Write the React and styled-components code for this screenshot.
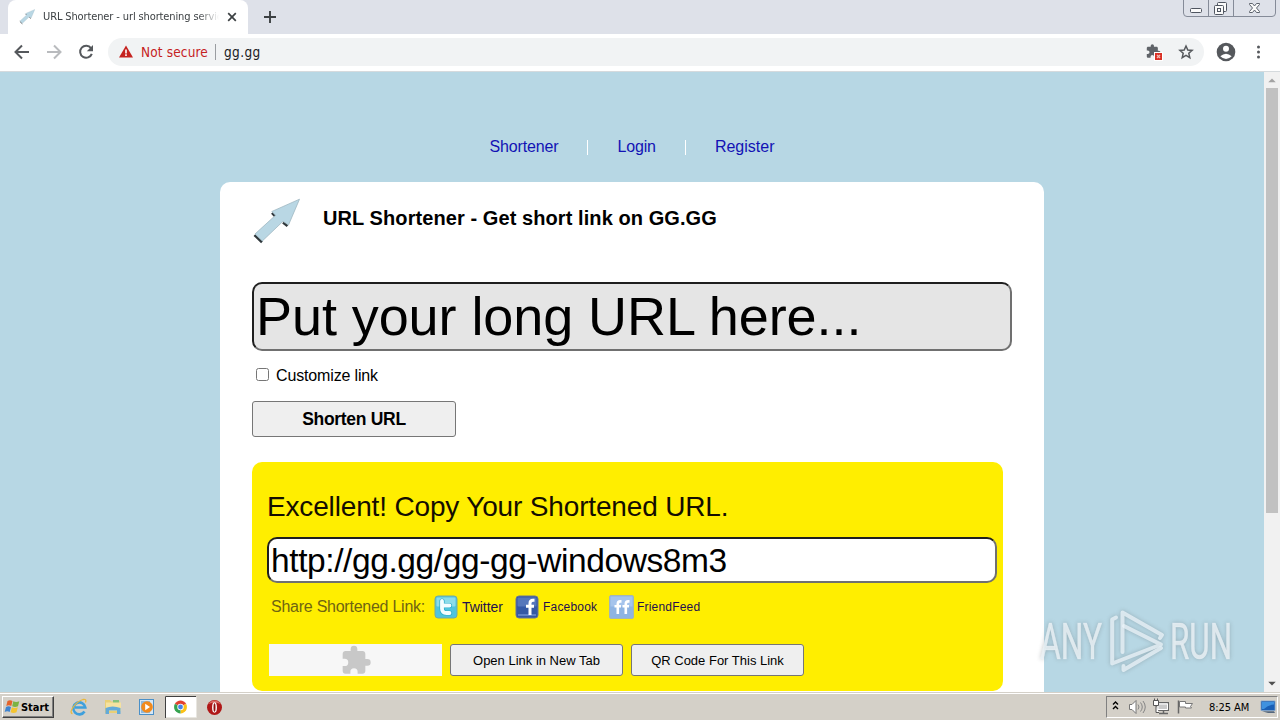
import React, { useState } from "react"
import styled, { createGlobalStyle } from "styled-components"

const App = () => {
  const [custom, setCustom] = useState(false)

  return (
    <Screen>
      <GlobalStyle />
      <TabStrip>
        <Tab>
          <ArrowLogo size={16} />
          <TabTitle>URL Shortener - url shortening servic</TabTitle>
          <CloseIcon />
        </Tab>
        <PlusIcon />
        <WindowControls />
      </TabStrip>

      <Toolbar>
        <NavIcons />
        <AddressBar>
          <WarningIcon />
          <NotSecure>Not secure</NotSecure>
          <AddressDivider />
          <Address>gg.gg</Address>
          <AddressIcons />
        </AddressBar>
        <ProfileIcons />
      </Toolbar>

      <Viewport>
        <Page>
          <Menu>
            <MenuLink href="#">Shortener</MenuLink>
            <MenuLink href="#">Login</MenuLink>
            <MenuLink href="#">Register</MenuLink>
          </Menu>
          <Card>
            <CardHeader>
              <ArrowLogo size={48} />
              <Title>URL Shortener - Get short link on GG.GG</Title>
            </CardHeader>
            <LongUrl defaultValue="Put your long URL here..." />
            <CheckRow>
              <CheckBox type="checkbox" checked={custom} onChange={() => setCustom(!custom)} />
              Customize link
            </CheckRow>
            <ShortenButton>Shorten URL</ShortenButton>
            <Result>
              <ResultTitle>Excellent! Copy Your Shortened URL.</ResultTitle>
              <ShortUrl defaultValue="http://gg.gg/gg-gg-windows8m3" />
              <ShareRow>
                <ShareLabel>Share Shortened Link:</ShareLabel>
                <TwitterIcon />
                <ShareLink href="#" $size={14} $width={53} $spacing={-0.05}>Twitter</ShareLink>
                <FacebookIcon />
                <ShareLink href="#" $size={12} $width={66} $spacing={0.2}>Facebook</ShareLink>
                <FriendFeedIcon />
                <ShareLink href="#" $size={12} $width={70} $spacing={0.2}>FriendFeed</ShareLink>
              </ShareRow>
              <ActionRow>
                <PluginBox><PuzzleIcon /></PluginBox>
                <ActionButton>Open Link in New Tab</ActionButton>
                <ActionButton>QR Code For This Link</ActionButton>
              </ActionRow>
            </Result>
          </Card>
        </Page>
        <Scrollbar>
          <ScrollArrow viewBox="0 0 16 17"><path d="M4 11l4-4 4 4z" fill="#a3a3a3" /></ScrollArrow>
          <ScrollThumb />
          <ScrollArrow viewBox="0 0 16 17"><path d="M4 6l4 4 4-4z" fill="#505050" /></ScrollArrow>
        </Scrollbar>
      </Viewport>

      <Taskbar>
        <StartButton>
          <WindowsFlag />
          Start
        </StartButton>
        <QuickLaunch />
        <Tray>
          <TrayIcons />
          <Clock>8:25 AM</Clock>
          <DesktopIcon />
        </Tray>
      </Taskbar>
      <Watermark />
    </Screen>
  )
}

export default App

// blue arrow, used for the favicon and for the page logo
const ArrowLogo = ({ size }) => (
  <svg width={size} height={size} viewBox="0 0 48 48">
    <path d="M2.500 37l7.500 7.300M20 14.800l3.500 3.700M31 24.500l4.500 3.500" stroke="#30383c" strokeWidth="2.600" />
    <path d="M47.500 1.200L19.800 13.500l3.700 3.800L3 36l7.300 7L31 23.300l5.500 3.700z" fill="#b9d7e4" stroke="#9fb8c2" strokeWidth=".8" />
  </svg>
)

const CloseIcon = () => (
  <svg width="10" height="10" viewBox="0 0 10 10">
    <path d="M1.200 1.200l7.600 7.600M8.800 1.200L1.200 8.800" stroke="#3c4043" strokeWidth="1.700" />
  </svg>
)

const PlusIcon = () => (
  <PlusSvg width="12" height="12" viewBox="0 0 12 12">
    <path d="M6 0v12M0 6h12" stroke="#3c4043" strokeWidth="1.900" />
  </PlusSvg>
)

const WindowControls = () => (
  <ControlsSvg width="94" height="18" viewBox="0 0 94 18" fill="none">
    <path d="M.5 0v13q0 3.500 3.500 3.500h85q3.500 0 3.500-3.500V0M25.500 0v16.500M50.500 0v16.500" stroke="#858b98" />
    <rect x="7.500" y="8.500" width="11" height="4" rx="1" stroke="#4f5560" fill="#fafafa" />
    <rect x="34.500" y="2.500" width="9" height="9" rx="1" stroke="#4f5560" fill="#fafafa" />
    <rect x="31.500" y="5.500" width="9" height="9" rx="1" stroke="#4f5560" fill="#fafafa" />
    <rect x="34.500" y="8.500" width="3" height="3" stroke="#4f5560" />
    <path d="M66.500 3.500h3l2 2.500 2-2.500h3v1l-3 3.500 3 3.500v1h-3l-2-2.500-2 2.500h-3v-1l3-3.500-3-3.500z" stroke="#5d636d" fill="#fafafa" />
  </ControlsSvg>
)

const NavIcons = () => (
  <svg width="108" height="36" viewBox="0 0 108 36" fill="none">
    <path d="M29 18H16.500M22 11.500L15.500 18l6.500 6.500" stroke="#55585c" strokeWidth="2" />
    <path d="M47 18h12.500M54 11.500l6.500 6.500-6.500 6.500" stroke="#b9bbbe" strokeWidth="2" />
    <path d="M91 14.200A6 6 0 1 0 91.800 19.800" stroke="#55585c" strokeWidth="2" />
    <path d="M93 11v6.200h-6.200z" fill="#55585c" />
  </svg>
)

const WarningIcon = () => (
  <svg width="14" height="13" viewBox="0 0 14 13">
    <path d="M7 .5L14 12.500H0z" fill="#c5221f" />
    <path d="M7 4.500v4M7 9.300v1.600" stroke="#fff" strokeWidth="1.600" />
  </svg>
)

const puzzle = "M20.500 11H19V7c0-1.100-.9-2-2-2h-4V3.500a2.500 2.500 0 0 0-5 0V5H4c-1.100 0-2 .9-2 2v3.800h1.500a2.700 2.700 0 0 1 0 5.400H2V20c0 1.100.9 2 2 2h3.800v-1.500a2.700 2.700 0 0 1 5.400 0V22H17c1.100 0 2-.9 2-2v-4h1.500a2.500 2.500 0 0 0 0-5z"

const PuzzleIcon = () => (
  <svg width="34" height="32" viewBox="0 0 24 24">
    <path d={puzzle} fill="#c8c8c8" transform="translate(0 .3)" />
  </svg>
)

const AddressIcons = () => (
  <RightSvg width="60" height="28" viewBox="0 0 60 28">
    <path d={puzzle} fill="#5f6368" transform="translate(1.500 5.500) scale(.65)" />
    <rect x="10.500" y="14.500" width="8" height="8" fill="#d93025" stroke="#fff" />
    <path d="M13 17l3 3M16 17l-3 3" stroke="#f3b9b4" strokeWidth="1.300" />
    <path d="M42 8l1.800 4 4.300.4-3.300 2.900 1 4.300-3.800-2.300-3.800 2.300 1-4.300-3.300-2.900 4.300-.4z" fill="none" stroke="#55585c" strokeWidth="1.500" />
  </RightSvg>
)

const ProfileIcons = () => (
  <svg width="76" height="36" viewBox="0 0 76 36">
    <circle cx="22" cy="18" r="9.300" fill="#55585c" />
    <circle cx="22" cy="14.700" r="3" fill="#fff" />
    <path d="M16.300 22.300q5.700-5 11.400 0q-5.700 5.500-11.400 0z" fill="#fff" />
    <circle cx="54.500" cy="13" r="1.500" fill="#55585c" />
    <circle cx="54.500" cy="18" r="1.500" fill="#55585c" />
    <circle cx="54.500" cy="23" r="1.500" fill="#55585c" />
  </svg>
)

const TwitterIcon = () => (
  <ShareSvg width="24" height="24" viewBox="0 0 24 24">
    <rect x="1" y="1" width="22" height="22" rx="3" fill="#4fc4dd" stroke="#74a9a0" />
    <rect x="2.500" y="2.500" width="19" height="9" rx="1" fill="#8bdcea" />
    <path d="M8 6v7.500q0 4.500 4.500 4.500h3M8.500 10.500h7" fill="none" stroke="#2babc9" strokeWidth="5.200" strokeLinecap="round" />
    <path d="M8 6v7.500q0 4.500 4.500 4.500h3M8.500 10.500h7" fill="none" stroke="#f4fdff" strokeWidth="3.800" strokeLinecap="round" />
  </ShareSvg>
)

const FacebookIcon = () => (
  <ShareSvg width="24" height="24" viewBox="0 0 24 24">
    <rect x="1" y="1" width="22" height="22" rx="3" fill="#3559a5" stroke="#6b7593" />
    <rect x="2.500" y="2.500" width="19" height="9" rx="1" fill="#5677bb" />
    <path d="M3 20h18" stroke="#6f90d0" strokeWidth="1.500" />
    <path d="M19.500 5.200h-1.500q-3 0-3 3V20M11 11.200h8" fill="none" stroke="#fff" strokeWidth="3" />
  </ShareSvg>
)

const FriendFeedIcon = () => (
  <ShareSvg $gap={3} width="25" height="24" viewBox="0 0 25 24">
    <rect x=".5" y=".5" width="24" height="23" rx="1.500" fill="#8fb4e2" stroke="#a5b6b4" />
    <rect x="1.500" y="1.500" width="22" height="10" fill="#a5c4ec" />
    <path d="M12.500 6.400h-1.200q-2.500 0-2.500 2.500V19M5.500 11.200H12M20.500 6.400h-1.200q-2.500 0-2.500 2.500V19M13.500 11.200H20" fill="none" stroke="#fff" strokeWidth="2.600" />
  </ShareSvg>
)

const WindowsFlag = () => (
  <svg width="17" height="16" viewBox="0 0 17 16">
    <path d="M3.500 2q2.500-1.500 5 0L7.300 7q-2.500-1.300-5 0z" fill="#e5642b" />
    <path d="M9.300 2.300q2.800 1.500 6 0L14 7.200q-3 1.500-5.800 0z" fill="#7cb342" />
    <path d="M2 8q2.600-1.400 5 0l-1.300 5q-2.400-1.300-5 0z" fill="#3f84d0" />
    <path d="M7.900 8.300q2.900 1.500 5.900 0l-1.300 5q-3 1.400-5.900 0z" fill="#f4c430" />
  </svg>
)

const QuickLaunch = () => (
  <QuickSvg width="170" height="26" viewBox="0 0 170 26">
    <path d="M18.500 17.500A6 6 0 1 1 19.300 13.500H9" fill="none" stroke="#3fa0dc" strokeWidth="2.600" />
    <path d="M6.500 19.500C2 19 9 8 17 5.500q4-.8 2.500 3" fill="none" stroke="#e8b83e" strokeWidth="1.300" />
    <path d="M39 6h5l1 1.500h9V19H39z" fill="#e9cf76" />
    <path d="M47 6h6v4h-6z" fill="#85c17c" />
    <path d="M40 8.500h15V17H40z" fill="#f5e2a0" />
    <path d="M39.500 14q7-3 15 0v6h-3.500v-3.500h-8V20h-3.500z" fill="#63aad9" />
    <rect x="73.500" y="5.500" width="14" height="15" fill="#d6e7f5" stroke="#4a90c8" />
    <rect x="75" y="7" width="9" height="12" fill="#8fb9dc" />
    <circle cx="81" cy="13" r="5.800" fill="#f28a1c" />
    <path d="M79.200 9.700l4.800 3.300-4.800 3.300z" fill="#fff" />
    <rect x="99" y="2" width="31" height="22" fill="#fff" />
    <path d="M99.500 24V2.500H130" fill="none" stroke="#404040" />
    <path d="M100 23.500h30.500V3" fill="none" stroke="#e8e6e0" />
    <path d="M114.500 13L108.900 9.800A6.500 6.500 0 0 1 120.100 9.800z" fill="#e2412f" />
    <path d="M114.500 13L120.100 9.800A6.500 6.500 0 0 1 114.500 19.500z" fill="#fbc117" />
    <path d="M114.500 13V19.500A6.500 6.500 0 0 1 108.900 9.800z" fill="#36a350" />
    <circle cx="114.500" cy="13" r="3.200" fill="#fff" />
    <circle cx="114.500" cy="13" r="2.400" fill="#4583e8" />
    <circle cx="148.500" cy="13.500" r="7.500" fill="#b01818" />
    <path d="M142.500 10a7 7 0 0 1 12 0q-6-3-12 0z" fill="#da6a64" />
    <ellipse cx="148.500" cy="13.500" rx="2.400" ry="5.200" fill="#fff" />
    <ellipse cx="148.500" cy="13.500" rx="1" ry="4.200" fill="#8f1010" />
  </QuickSvg>
)

const TrayIcons = () => (
  <svg width="94" height="22" viewBox="0 0 94 22" fill="none">
    <path d="M6 8.500L8.500 6 11 8.500M6 13l2.500-2.500L11 13" stroke="#000" strokeWidth="1.400" />
    <path d="M22.500 8.500h2.500l4-4v13l-4-4h-2.500z" fill="#fff" stroke="#767676" />
    <path d="M31 8.500q2 2.500 0 5M33.500 6.500q3.500 4.500 0 9M36 5q4.500 6 0 12" stroke="#858585" />
    <rect x="49.500" y="6.500" width="12" height="8" fill="#c9c9c9" stroke="#666" />
    <path d="M51 8h9.500v5.500H51z" stroke="#fff" />
    <path d="M52 17.500h9M56.500 15v2" stroke="#666" strokeWidth="1.500" />
    <path d="M46.500 4.500h5v5h-5zM47.500 2.500v2M50.500 2.500v2M49 9.500v7h3" stroke="#555" fill="#fff" />
    <path d="M71.500 4.500v13" stroke="#666" strokeWidth="1.500" />
    <path d="M72.500 5.500h6v2h7l-2 3 1 1.500h-6v-1h-6z" fill="#fff" stroke="#777" />
  </svg>
)

const DesktopIcon = () => (
  <svg width="17" height="14" viewBox="0 0 17 14">
    <path d="M1 1h14v9.500H1z" fill="#195eb5" stroke="#7fa2c9" strokeWidth=".8" />
    <path d="M2 2h12v2.500Q8 5 4 9H2z" fill="#3f91df" />
    <path d="M2 11.200h12l1 1.800H8z" fill="#54677e" />
  </svg>
)

const Watermark = () => (
  <MarkSvg width="210" height="76" viewBox="0 0 210 76">
    <g fill="#edf4f7" fillOpacity=".8" stroke="#edf4f7" strokeOpacity=".5" strokeWidth=".7">
      <MarkText x="5" y="53.500" textLength="62" lengthAdjust="spacingAndGlyphs">ANY</MarkText>
      <MarkText x="135" y="53.500" textLength="62" lengthAdjust="spacingAndGlyphs">RUN</MarkText>
    </g>
    <g fill="none" stroke="#eaf4f8" strokeOpacity=".78" strokeWidth="4" strokeLinejoin="round" strokeLinecap="round">
      <path d="M81 12.500l-3.800 2V58.500L126 39.500 89 21" />
      <path d="M87.500 47V7.500L127 30l-2 3" />
      <path d="M88.500 61v4L126 43" />
    </g>
  </MarkSvg>
)

const GlobalStyle = createGlobalStyle`
  * {
    box-sizing: border-box;
  }

  body {
    margin: 0;
    overflow: hidden;
    font-family: "Liberation Sans", Arial, sans-serif;
  }

  svg {
    display: block;
    flex-shrink: 0;
  }
`

const Screen = styled.div`
  position: relative;
  display: flex;
  flex-direction: column;
  width: 1280px;
  height: 720px;
  overflow: hidden;
  background: #fff;
`

const TabStrip = styled.div`
  display: flex;
  height: 34px;
  flex-shrink: 0;
  padding-left: 8px;
  background: #dee1e9;
`

const Tab = styled.div`
  display: flex;
  align-items: center;
  width: 240px;
  padding: 0 11px;
  border-radius: 8px 8px 0 0;
  background: #fff;
`

const TabTitle = styled.div`
  width: 176px;
  margin: 0 8px;
  overflow: hidden;
  white-space: nowrap;
  font: 11px/16px "DejaVu Sans Condensed", "DejaVu Sans", sans-serif;
  letter-spacing: -0.12px;
  color: #3c4043;
  mask-image: linear-gradient(to right, #000 155px, transparent 176px);
`

const PlusSvg = styled.svg`
  margin: 11px 0 0 16px;
`

const ControlsSvg = styled.svg`
  margin-left: auto;
  margin-right: 3px;
`

const Toolbar = styled.div`
  display: flex;
  align-items: center;
  height: 38px;
  flex-shrink: 0;
  padding-bottom: 2px;
  border-bottom: 1px solid #d5dadd;
  background: #fff;
`

const AddressBar = styled.div`
  display: flex;
  align-items: center;
  flex: 1;
  height: 28px;
  padding-left: 11px;
  border-radius: 14px;
  background: #f1f3f4;
  font: 14px/20px "DejaVu Sans Condensed", "DejaVu Sans", sans-serif;
`

const NotSecure = styled.span`
  margin-left: 8px;
  width: 67px;
  font-size: 13.500px;
  letter-spacing: 0.15px;
  white-space: nowrap;
  color: #c5221f;
`

const AddressDivider = styled.span`
  width: 1px;
  height: 16px;
  margin: 0 8px 0 7px;
  background: #9a9da1;
`

const Address = styled.span`
  font-size: 13.500px;
  letter-spacing: 0.4px;
  color: #202124;
`

const RightSvg = styled.svg`
  margin-left: auto;
`

const Viewport = styled.div`
  display: flex;
  height: 620px;
  overflow: hidden;
  background: #b7d7e4;
`

const Page = styled.div`
  flex: 1;
`

const Menu = styled.nav`
  display: flex;
  justify-content: center;
  height: 110px;
  padding-top: 65px;
`

const MenuLink = styled.a`
  height: 19px;
  padding: 0 29px;
  font-size: 16px;
  line-height: 19px;
  letter-spacing: -0.15px;
  text-decoration: none;
  color: #1212b4;

  & + & {
    padding-left: 30px;
    background: linear-gradient(#fff, #fff) 0 3px / 1px 15px no-repeat;
  }

  &:last-child {
    letter-spacing: 0;
  }
`

const Card = styled.main`
  width: 824px;
  height: 620px;
  margin: 0 auto;
  padding: 16px 32px;
  border-radius: 10px;
  background: #fff;
`

const CardHeader = styled.div`
  display: flex;
  height: 84px;
`

const Title = styled.h1`
  margin: 8px 0 0 23px;
  font-size: 20px;
  line-height: 24px;
  letter-spacing: 0.08px;
  white-space: nowrap;
  color: #000;
`

const LongUrl = styled.input`
  display: block;
  width: 760px;
  height: 69px;
  padding: 0 2px 2px;
  border: 2px solid;
  border-color: #1e1e1e #707070 #707070 #1e1e1e;
  border-radius: 10px;
  outline: none;
  font: 54px/62px "Liberation Sans", Arial, sans-serif;
  letter-spacing: -0.08px;
  color: #000;
  background: #e5e5e5;
`

const CheckRow = styled.label`
  display: flex;
  align-items: center;
  height: 50px;
  padding-left: 4px;
  font-size: 16px;
  letter-spacing: -0.15px;
  color: #000;
`

const CheckBox = styled.input`
  width: 13px;
  height: 13px;
  margin: 0 7px 3px 0;
`

const ShortenButton = styled.button`
  display: block;
  width: 204px;
  height: 36px;
  padding: 0;
  border: 1px solid #767676;
  border-radius: 3px;
  font: bold 17.500px "Liberation Sans", Arial, sans-serif;
  letter-spacing: -0.3px;
  color: #000;
  background: #efefef;
`

const Result = styled.section`
  width: 751px;
  height: 229px;
  margin-top: 24.500px;
  padding: 28px 6px 0 15px;
  border-radius: 10px;
  background: #ffee00;
`

const ResultTitle = styled.div`
  height: 47.500px;
  font-size: 28px;
  line-height: 34px;
  letter-spacing: -0.16px;
  white-space: nowrap;
  color: #140d00;
`

const ShortUrl = styled(LongUrl)`
  width: 730px;
  height: 46px;
  padding: 1px 2px 0;
  font: 33.500px/40px "Liberation Sans", Arial, sans-serif;
  letter-spacing: -0.4px;
  background: #fff;
`

const ShareRow = styled.div`
  display: flex;
  align-items: center;
  height: 48px;
  padding-left: 4px;
`

const ShareLabel = styled.span`
  width: 163px;
  font-size: 16px;
  letter-spacing: -0.25px;
  white-space: nowrap;
  color: #6f6412;
`

const ShareSvg = styled.svg`
  margin-right: ${(props) => props.$gap || 4}px;
`

const ShareLink = styled.a`
  width: ${(props) => props.$width}px;
  font-size: ${(props) => props.$size}px;
  letter-spacing: ${(props) => props.$spacing || 0}px;
  white-space: nowrap;
  text-decoration: none;
  color: #24104e;
`

const ActionRow = styled.div`
  display: flex;
  gap: 8px;
  padding: 13px 0 0 2px;
`

const PluginBox = styled.div`
  display: flex;
  justify-content: center;
  width: 173px;
  height: 32px;
  background: #f7f7f7;
`

const ActionButton = styled.button`
  width: 173px;
  height: 32px;
  padding: 0;
  border: 1px solid #767676;
  border-radius: 3px;
  font: 13px "Liberation Sans", Arial, sans-serif;
  color: #000;
  background: #efefef;
`

const Scrollbar = styled.div`
  display: flex;
  flex-direction: column;
  width: 16px;
  background: #f1f1f1;
`

const ScrollArrow = styled.svg`
  width: 16px;
  height: 16px;

  &:last-child {
    margin-top: auto;
  }
`

const ScrollThumb = styled.div`
  width: 12px;
  height: 425px;
  margin-left: 2px;
  background: #c1c1c1;
`

const Taskbar = styled.footer`
  display: flex;
  height: 28px;
  border-top: 1px solid #d4d0c8;
  box-shadow: inset 0 1px #fff;
  background: #d4d0c8;
`

const StartButton = styled.button`
  display: flex;
  align-items: center;
  width: 52px;
  height: 22px;
  margin: 3px 0 0 2px;
  padding: 0 0 0 1px;
  border: 1px solid;
  border-color: #fff #404040 #404040 #fff;
  box-shadow: inset -1px -1px #808080;
  font: bold 11px "DejaVu Sans Condensed", "DejaVu Sans", sans-serif;
  letter-spacing: -0.05px;
  color: #000;
  background: #d4d0c8;
`

const QuickSvg = styled.svg`
  margin: 1px 0 0 12px;
`

const Tray = styled.div`
  display: flex;
  align-items: center;
  width: 172px;
  height: 22px;
  margin: 3px 2px 0 auto;
  border: 1px solid;
  border-color: #808080 #fff #fff #808080;
`

const Clock = styled.span`
  width: 52px;
  margin-left: 8px;
  font: 11px "DejaVu Sans Condensed", "DejaVu Sans", sans-serif;
  letter-spacing: -0.05px;
  white-space: nowrap;
  color: #000;
`

const MarkSvg = styled.svg`
  position: absolute;
  left: 1035px;
  top: 605px;
  overflow: visible;
  filter: drop-shadow(0 0 2px rgba(90, 100, 105, 0.45));
  pointer-events: none;
`

const MarkText = styled.text`
  font: 400 50px Roboto, sans-serif;
`
